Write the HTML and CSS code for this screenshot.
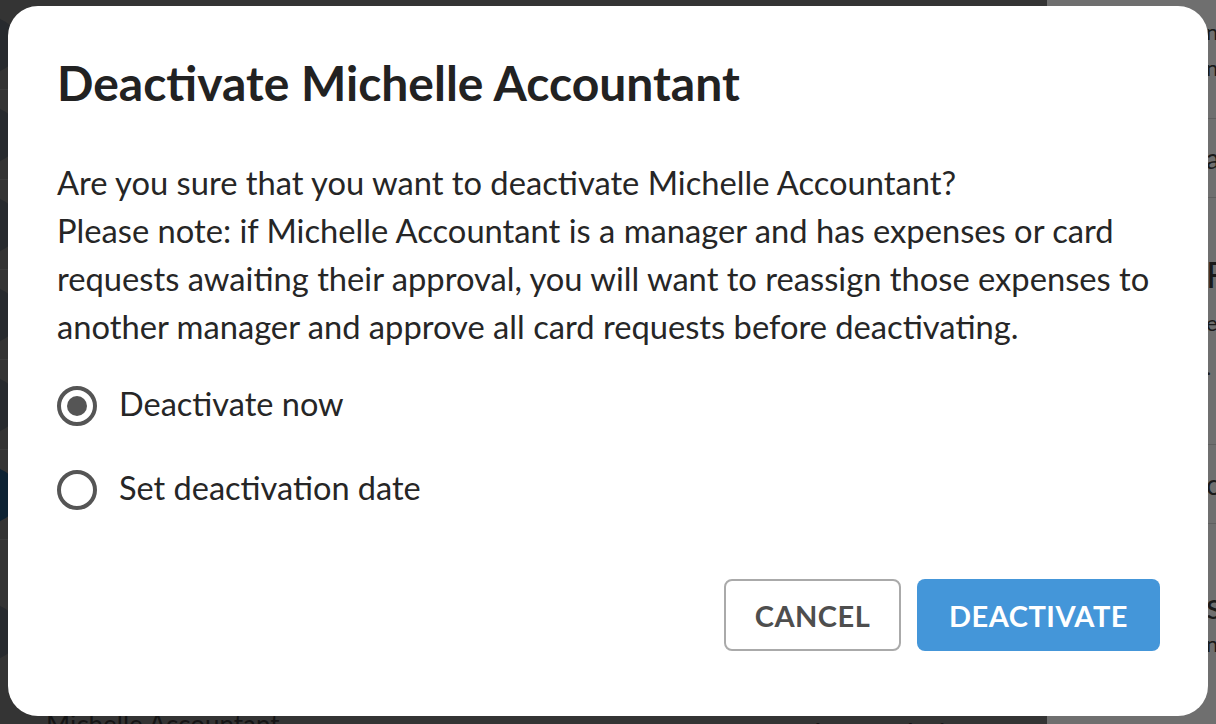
FILE: index.html
```html
<!DOCTYPE html>
<html>
<head>
<meta charset="utf-8">
<link rel="stylesheet" href="styles.css">
</head>
<body>
<div class="page">
  <div class="left-bg">
    <div class="row"><span class="avatar"></span></div>
    <div class="row"><span class="avatar"></span></div>
    <div class="row"><span class="avatar"></span></div>
    <div class="row"><span class="avatar"></span></div>
    <div class="row"><span class="avatar"></span></div>
    <div class="row"><span class="avatar blue"></span></div>
    <div class="row last"><span class="avatar"></span><span class="bg-name">Michelle Accountant</span><span class="bg-m">M</span><span class="bg-a">Andrew Admin</span></div>
  </div>
  <div class="right-bg">
    <div class="rb n1">n</div>
    <div class="rb n2">n</div>
    <div class="rb-sep s1"></div>
    <div class="rb block">a</div>
    <div class="rb-sep"></div>
    <div class="rb big f">F</div>
    <div class="rb e">e</div>
    <div class="rb dot">.</div>
    <div class="rb-sep s3"></div>
    <div class="rb block">c</div>
    <div class="rb-sep"></div>
    <div class="rb big s">s</div>
    <div class="rb n3">n</div>
  </div>
</div>

<div class="modal">
  <h1 class="title">Deactivate Michelle Accountant</h1>
  <p class="body">Are you sure that you want to deactivate Michelle Accountant?<br>Please note: if Michelle Accountant is a manager and has expenses or card requests awaiting their approval, you will want to reassign those expenses to another manager and approve all card requests before deactivating.</p>
  <div class="options">
    <label class="option"><span class="radio checked"></span><span>Deactivate now</span></label>
    <label class="option"><span class="radio"></span><span>Set deactivation date</span></label>
  </div>
  <div class="actions">
    <button class="btn cancel">CANCEL</button>
    <button class="btn primary">DEACTIVATE</button>
  </div>
</div>
</body>
</html>
```

FILE: styles.css
```css
html, body {
  margin: 0;
  padding: 0;
  width: 1216px;
  height: 724px;
  overflow: hidden;
  font-family: Lato, "Open Sans", sans-serif;
}
.page {
  display: flex;
  width: 1216px;
  height: 724px;
  background: #333;
  overflow: hidden;
}
.left-bg {
  width: 1047px;
  flex: none;
  background: #343434;
  display: flex;
  flex-direction: column;
}
.row {
  height: 89px;
  border-bottom: 1px solid #3d3d3d;
  display: flex;
  align-items: center;
}
.row.last {
  border-bottom: none;
  flex: 1;
  align-items: flex-end;
}
.avatar {
  width: 56px;
  height: 56px;
  border-radius: 50%;
  background: #272a2e;
  margin-left: -38px;
  flex: none;
  align-self: center;
}
.avatar.blue { background: #0d2233; }
.bg-name {
  color: #151515;
  font-size: 26px;
  margin-left: 28px;
  line-height: 40px;
  height: 20px;
  overflow: hidden;
}
.bg-m { color: #151515; font-size: 30px; margin-left: 150px; line-height: 40px; height: 10px; overflow: hidden; }
.bg-a { color: #151515; font-size: 30px; margin-left: 310px; line-height: 40px; height: 10px; overflow: hidden; }

.right-bg {
  flex: none;
  width: 169px;
  box-sizing: border-box;
  background: #6f6f6f;
  padding-left: 159px;
  color: #1a1a1a;
  font-size: 22px;
  display: flex;
  flex-direction: column;
  overflow: hidden;
}
.rb { height: 24px; line-height: 24px; white-space: nowrap; }
.rb.big { font-size: 36px; height: 36px; line-height: 36px; }
.rb.block { font-size: 28px; height: 78px; line-height: 78px; }
.n1 { margin-top: 20px; }
.n2 { margin-top: 12px; }
.s1 { margin-top: 38px; }
.f { margin-top: 58px; }
.e { margin-top: 19px; }
.dot { margin-top: 20px; }
.s3 { margin-top: 65px; }
.s { margin-top: 63px; }
.n3 { margin-top: 9px; }
.rb-sep { height: 1px; background: #5f5f5f; margin-left: -159px; flex: none; }

.modal {
  position: absolute;
  left: 8px;
  top: 6px;
  width: 1200px;
  height: 710px;
  box-sizing: border-box;
  background: #fff;
  border-radius: 30px;
  padding: 49px 48px 0 49px;
  color: #262626;
  display: flex;
  flex-direction: column;
}
.title {
  margin: 0;
  font-size: 48px;
  font-weight: 700;
  line-height: 56px;
  color: #222;
}
.body {
  margin: 48px 0 0;
  font-size: 32.7px;
  line-height: 48px;
  color: #262626;
}
.options {
  margin-top: 35px;
  display: flex;
  flex-direction: column;
  gap: 44px;
}
.option {
  display: flex;
  align-items: center;
  gap: 22px;
  font-size: 32.5px;
  line-height: 40px;
  color: #262626;
}
.option span:last-child { position: relative; top: -2px; }
.radio {
  width: 40px;
  height: 40px;
  box-sizing: border-box;
  border: 4px solid #555;
  border-radius: 50%;
  display: flex;
  align-items: center;
  justify-content: center;
  flex: none;
}
.radio.checked::after {
  content: "";
  width: 20px;
  height: 20px;
  border-radius: 50%;
  background: #555;
}
.actions {
  margin-top: 69px;
  display: flex;
  justify-content: flex-end;
  gap: 16px;
}
.btn {
  height: 72px;
  box-sizing: border-box;
  border-radius: 8px;
  font-family: Lato, sans-serif;
  font-weight: 700;
  font-size: 29px;
  letter-spacing: 0.5px;
  padding: 0;
}
.cancel {
  background: #fff;
  border: 2px solid #aaa;
  color: #4e4e4e;
  width: 177px;
}
.primary {
  background: #4496d9;
  border: none;
  color: #fff;
  width: 243px;
}
```
